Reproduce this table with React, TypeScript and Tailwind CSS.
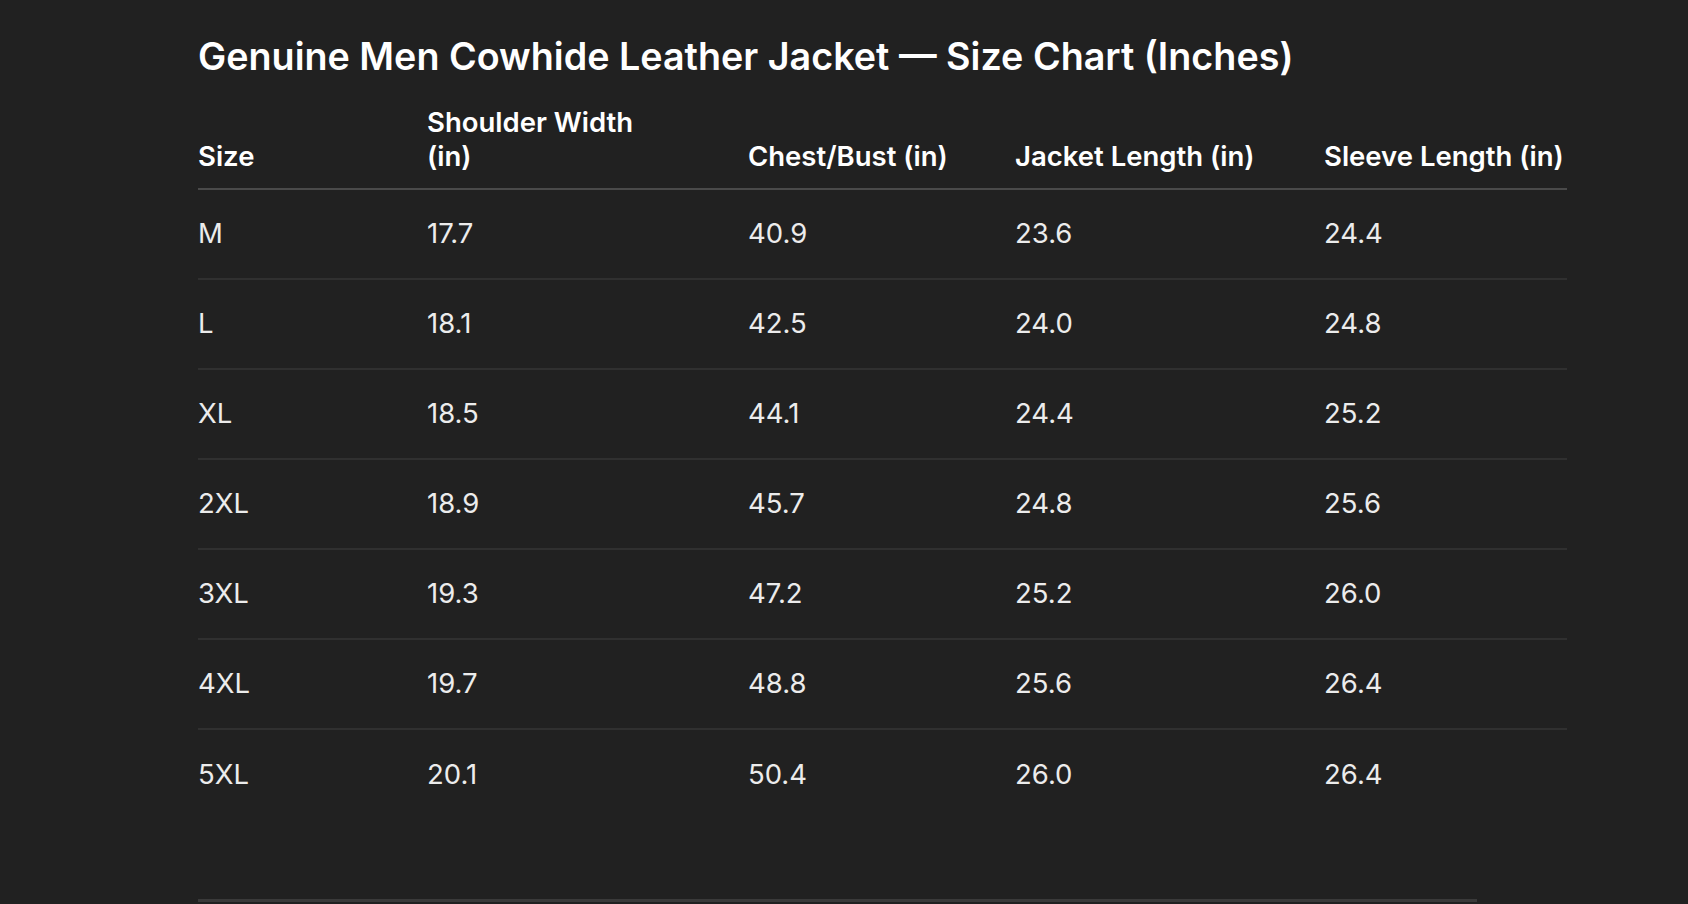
const rows = [
  { size: "M", shoulder: "17.7", chest: "40.9", length: "23.6", sleeve: "24.4" },
  { size: "L", shoulder: "18.1", chest: "42.5", length: "24.0", sleeve: "24.8" },
  { size: "XL", shoulder: "18.5", chest: "44.1", length: "24.4", sleeve: "25.2" },
  { size: "2XL", shoulder: "18.9", chest: "45.7", length: "24.8", sleeve: "25.6" },
  { size: "3XL", shoulder: "19.3", chest: "47.2", length: "25.2", sleeve: "26.0" },
  { size: "4XL", shoulder: "19.7", chest: "48.8", length: "25.6", sleeve: "26.4" },
  { size: "5XL", shoulder: "20.1", chest: "50.4", length: "26.0", sleeve: "26.4" },
];

export default function App() {
  return (
    <div
      className="min-h-screen bg-[#212121] text-[#ececec] pl-[198px] pt-[33px]"
      style={{ fontFamily: "Inter, 'Noto Sans', sans-serif" }}
    >
      <h1 className="text-[37.7px] leading-[46px] font-semibold text-white">
        Genuine Men Cowhide Leather Jacket — Size Chart (Inches)
      </h1>

      <table className="mt-[26px] w-[1369px] table-fixed border-collapse text-[27.5px]">
        <colgroup>
          <col className="w-[229px]" />
          <col className="w-[321px]" />
          <col className="w-[267px]" />
          <col className="w-[309px]" />
          <col className="w-[243px]" />
        </colgroup>
        <thead>
          <tr className="border-b-2 border-[#4a4a4a]">
            <th className="text-left align-bottom font-semibold text-white leading-[34px] pb-[15px]">Size</th>
            <th className="text-left align-bottom font-semibold text-white leading-[34px] pb-[15px]">
              <div className="max-w-[230px]">Shoulder Width (in)</div>
            </th>
            <th className="text-left align-bottom font-semibold text-white leading-[34px] pb-[15px]">Chest/Bust (in)</th>
            <th className="text-left align-bottom font-semibold text-white leading-[34px] pb-[15px]">Jacket Length (in)</th>
            <th className="text-left align-bottom font-semibold text-white leading-[34px] pb-[15px] whitespace-nowrap">Sleeve Length (in)</th>
          </tr>
        </thead>
        <tbody>
          {rows.map((row, i) => (
            <tr
              key={row.size}
              className={i < rows.length - 1 ? "h-[90px] border-b-2 border-[#303030]" : "h-[90px]"}
            >
              <td className="align-middle">{row.size}</td>
              <td className="align-middle">{row.shoulder}</td>
              <td className="align-middle">{row.chest}</td>
              <td className="align-middle">{row.length}</td>
              <td className="align-middle">{row.sleeve}</td>
            </tr>
          ))}
        </tbody>
      </table>

      <div className="mt-[80px] h-[3px] w-[1279px] bg-[#3a3a3a]" />
    </div>
  );
}
